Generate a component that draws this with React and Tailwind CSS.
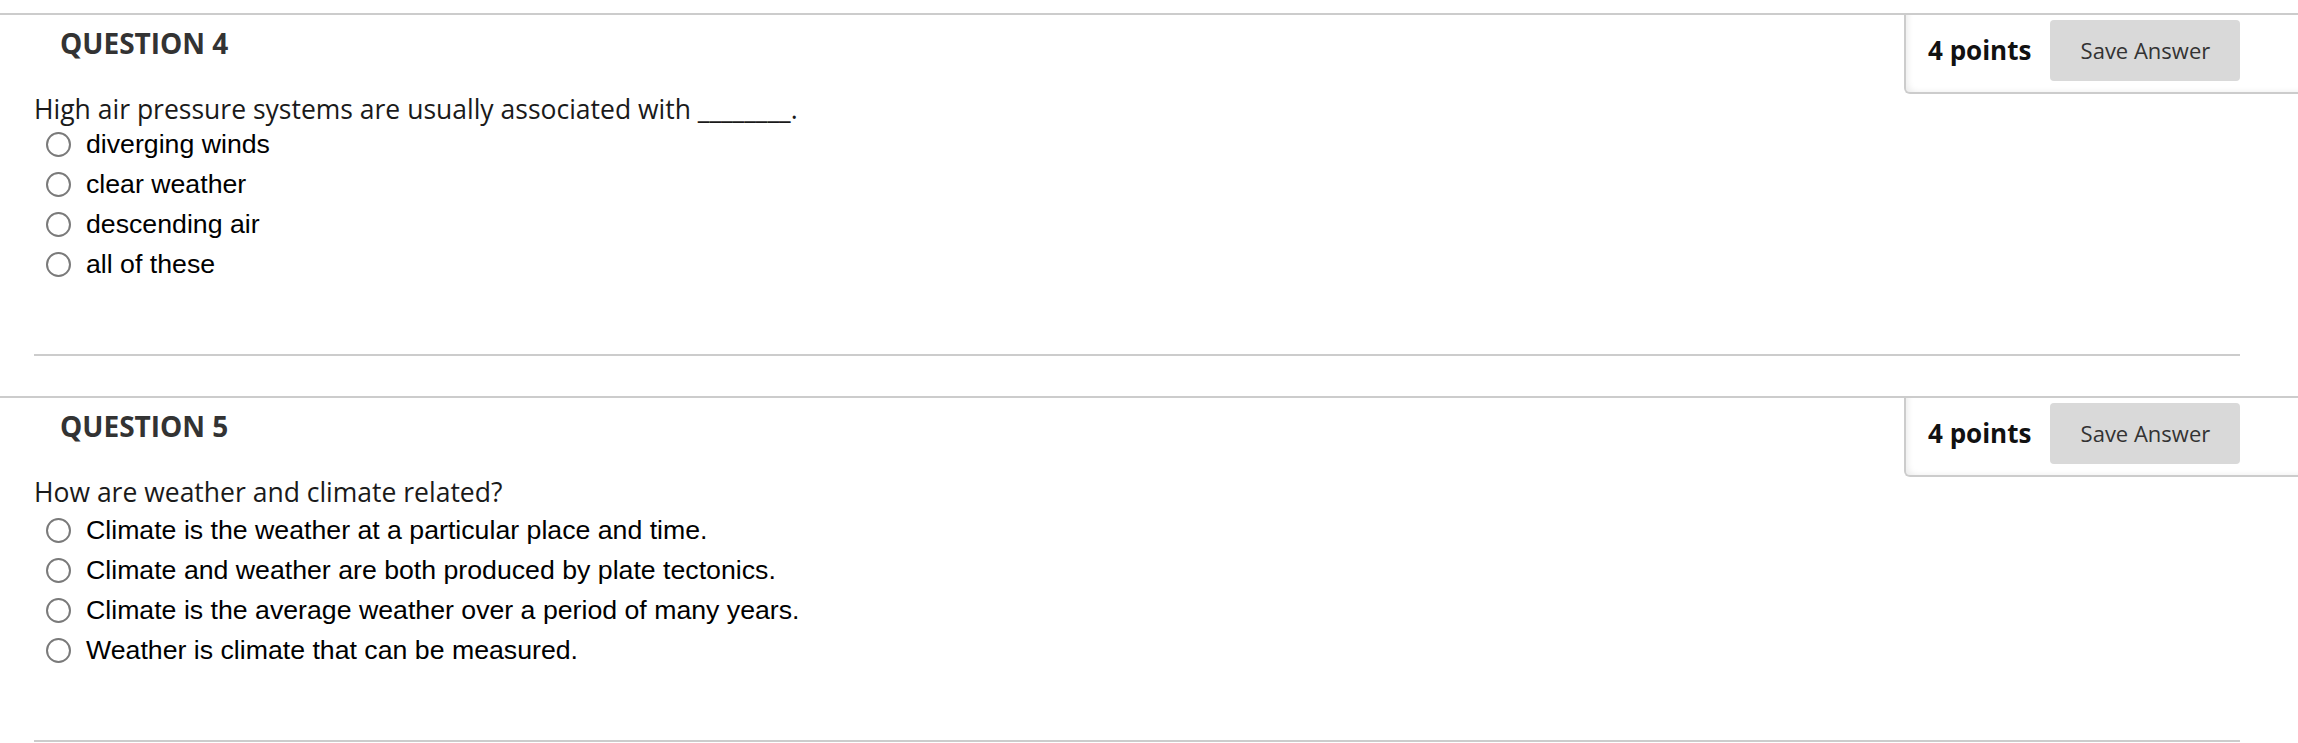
import React from "react";

const questions = [
  {
    num: 4,
    points: 4,
    text: "High air pressure systems are usually associated with ________.",
    options: ["diverging winds", "clear weather", "descending air", "all of these"],
    listClass: "",
  },
  {
    num: 5,
    points: 4,
    text: "How are weather and climate related?",
    options: [
      "Climate is the weather at a particular place and time.",
      "Climate and weather are both produced by plate tectonics.",
      "Climate is the average weather over a period of many years.",
      "Weather is climate that can be measured.",
    ],
    // the second question's answers sit a few px lower
    listClass: "mt-[3px]",
  },
];

function Question({ q }) {
  return (
    <section className="mb-[40px] border-t-2 border-[#cccccc]">
      {/* header row */}
      <div className="flex items-start justify-between">
        <h2 className="pl-[60px] pt-[9px] font-['Open_Sans',sans-serif] text-[28px] font-bold leading-[38px] text-[#333333]">
          QUESTION {q.num}
        </h2>
        <div className="flex h-[79px] w-[394px] items-start gap-[19px] rounded-bl-[6px] border-b-2 border-l-2 border-[#cccccc] bg-white pl-[22px] pt-[5px] shadow-[inset_6px_-4px_6px_-4px_rgba(0,0,0,0.08)]">
          <div className="flex h-[61px] items-center font-['Open_Sans',sans-serif] text-[26px] font-bold text-[#111111]">
            {q.points} points
          </div>
          <button
            type="button"
            className="h-[61px] w-[190px] rounded-[4px] bg-[#d9d9d9] font-['Open_Sans',sans-serif] text-[22px] text-[#333333]"
          >
            Save Answer
          </button>
        </div>
      </div>

      {/* body */}
      <div className="pl-[34px] pr-[58px]">
        <p className="font-['Open_Sans',sans-serif] text-[26.5px] leading-[30px] text-[#1a1a1a]">
          {q.text}
        </p>
        <ul className={q.listClass}>
          {q.options.map((opt) => (
            <li
              key={opt}
              className="flex h-[40px] items-center gap-[15px] pl-[12px] font-['Liberation_Sans',Arial,sans-serif] text-[26.7px] text-black"
            >
              <span className="h-[25px] w-[25px] shrink-0 rounded-full border-2 border-[#7a7a7a] bg-white" />
              <span>{opt}</span>
            </li>
          ))}
        </ul>
        <div className="mt-[70px] border-t-2 border-[#cccccc]" />
      </div>
    </section>
  );
}

export default function App() {
  return (
    <div className="min-h-screen bg-white pt-[13px]">
      {questions.map((q) => (
        <Question key={q.num} q={q} />
      ))}
    </div>
  );
}
